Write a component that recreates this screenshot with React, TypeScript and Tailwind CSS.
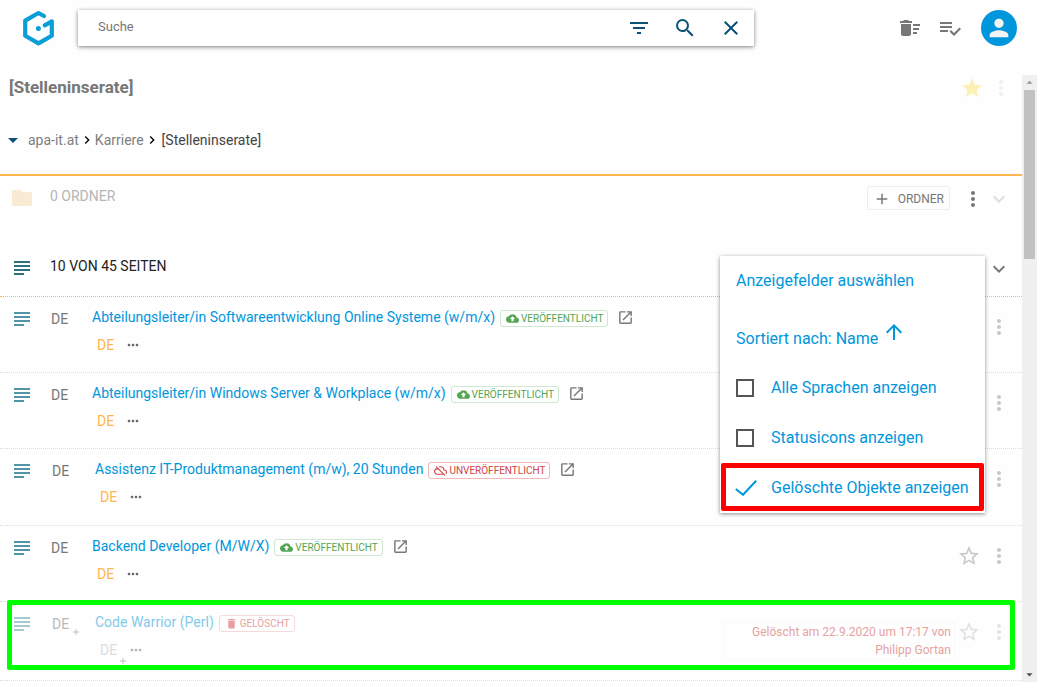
import { useState } from 'react'
import { clsx } from 'clsx'
import {
  MdAdd,
  MdArrowDropDown,
  MdArrowDropUp,
  MdArrowUpward,
  MdBackup,
  MdChevronRight,
  MdClose,
  MdDelete,
  MdDeleteSweep,
  MdExpandMore,
  MdFilterList,
  MdFolder,
  MdMoreHoriz,
  MdMoreVert,
  MdOpenInNew,
  MdOutlineCloudOff,
  MdPerson,
  MdSearch,
  MdStar,
  MdStarBorder,
  MdSubject,
} from 'react-icons/md'

type Status = 'published' | 'unpublished' | 'deleted'

interface Page {
  title: string
  status: Status
  starrable?: boolean
  note?: string
}

const pages: Page[] = [
  { title: 'Abteilungsleiter/in Softwareentwicklung Online Systeme (w/m/x)', status: 'published' },
  { title: 'Abteilungsleiter/in Windows Server & Workplace (w/m/x)', status: 'published' },
  { title: 'Assistenz IT-Produktmanagement (m/w), 20 Stunden', status: 'unpublished' },
  { title: 'Backend Developer (M/W/X)', status: 'published', starrable: true },
  {
    title: 'Code Warrior (Perl)',
    status: 'deleted',
    starrable: true,
    note: 'Gelöscht am 22.9.2020 um 17:17 von Philipp Gortan',
  },
]

const statusBadges = {
  published: { label: 'VERÖFFENTLICHT', icon: MdBackup, style: 'text-[#52a552] border-[#cfe8cf]' },
  unpublished: { label: 'UNVERÖFFENTLICHT', icon: MdOutlineCloudOff, style: 'text-[#cf4545] border-[#f0b8b8]' },
  deleted: { label: 'GELÖSCHT', icon: MdDelete, style: 'text-[#cf4545] border-[#f0b8b8]' },
}

const rowHeights = {
  published: 'h-[76px]',
  unpublished: 'h-[77px]',
  deleted: 'h-[79px]',
}

const Logo = () => (
  <svg className="h-9 w-8 shrink-0" viewBox="0 0 32 36" fill="none" stroke="#089fd9" strokeWidth="4.2" strokeLinejoin="round">
    <path d="M21 6 15.5 3 2.2 10.6v15.1l13.3 7.7 13.3-7.7V11.3L21.7 15.3" strokeLinecap="round" />
    <circle cx="15.4" cy="18.6" r="2.5" fill="#089fd9" stroke="none" />
  </svg>
)

const PlaylistCheck = () => (
  <svg className="h-6 w-6" viewBox="0 0 24 24" fill="currentColor">
    <path d="M14 10H2v2h12v-2zm0-4H2v2h12V6zM2 16h8v-2H2v2zm19.5-4.5L23 13l-6.99 7-4.51-4.5L13 14l3.01 3 5.49-5.5z" />
  </svg>
)

function Header() {
  return (
    <header className="flex h-[75px] shrink-0 items-start pt-[10px] pl-[23px]">
      <a href="#" aria-label="Startseite">
        <Logo />
      </a>
      <form className="ml-[23px] flex h-9 flex-1 items-center gap-[22px] rounded-[1px] bg-white pr-[11px] pl-5 text-[#0b5077] shadow-[0_1px_4px_rgba(0,0,0,0.5)]">
        <input
          type="text"
          aria-label="Suche"
          placeholder="Suche"
          className="h-8 min-w-0 flex-1 pb-1 text-[13px] outline-none placeholder:text-[#777]"
        />
        <button type="button" aria-label="Filter"><MdFilterList className="h-6 w-6" /></button>
        <button type="button" aria-label="Suchen"><MdSearch className="h-6 w-6" /></button>
        <button type="button" aria-label="Schließen"><MdClose className="h-6 w-6" /></button>
      </form>
      <div className="flex h-9 w-[283px] items-center justify-end gap-4 pr-5 text-[#777]">
        <button aria-label="Papierkorb"><MdDeleteSweep className="h-6 w-6" /></button>
        <button aria-label="Aufgaben"><PlaylistCheck /></button>
        <button aria-label="Benutzer" className="ml-[3px] flex h-9 w-9 items-center justify-center rounded-full bg-[#0096dc] text-[#f3f3f3]">
          <MdPerson className="h-7 w-7" />
        </button>
      </div>
    </header>
  )
}

function Breadcrumb() {
  return (
    <nav className="flex h-6 items-center text-sm text-[#808080]">
      <button aria-label="Pfad öffnen" className="mr-[3px] ml-px text-[#0b5077]"><MdArrowDropDown className="h-6 w-6" /></button>
      <a href="#">apa-it.at</a>
      <MdChevronRight className="h-4 w-4 text-black" />
      <a href="#">Karriere</a>
      <MdChevronRight className="h-4 w-4 text-black" />
      <span className="ml-[2px] text-[#444]">[Stelleninserate]</span>
    </nav>
  )
}

function DisplayMenu() {
  const [options, setOptions] = useState([
    { label: 'Alle Sprachen anzeigen', checked: false, marked: false },
    { label: 'Statusicons anzeigen', checked: false, marked: false },
    { label: 'Gelöschte Objekte anzeigen', checked: true, marked: true },
  ])

  const toggle = (label: string) => {
    setOptions(options.map((o) => (o.label === label ? { ...o, checked: !o.checked } : o)))
  }

  return (
    <div className="absolute top-4 right-[37px] z-10 flex h-[257px] w-[265px] flex-col bg-white text-base text-[#0096dc] shadow-[0_1px_4px_rgba(0,0,0,0.45)]">
      <button className="flex h-[50px] items-center pl-4">Anzeigefelder auswählen</button>
      <button className="flex h-[57px] items-center gap-1 pt-2 pl-4">
        Sortiert nach: Name
        <MdArrowUpward className="mb-[14px] h-6 w-6" />
      </button>
      {options.map((option) => (
        <label
          key={option.label}
          className={clsx('relative flex h-[50px] items-center pl-4', {
            'before:absolute before:inset-x-px before:top-0 before:h-12 before:rounded-[2px] before:border-[5px] before:border-[#ff0000]': option.marked,
          })}
        >
          <input
            type="checkbox"
            checked={option.checked}
            onChange={() => toggle(option.label)}
            className="mr-[17px] h-[18px] w-[18px] appearance-none border-2 border-[#555] checked:border-transparent"
          />
          {option.checked && (
            <svg className="absolute left-[15px] h-4 w-[22px]" viewBox="0 0 22 16" fill="none" stroke="currentColor" strokeWidth="2">
              <path d="M.8 9 8 14.8 21.2.8" />
            </svg>
          )}
          {option.label}
        </label>
      ))}
    </div>
  )
}

function StatusBadge({ status }: { status: Status }) {
  const badge = statusBadges[status]
  return (
    <span className={clsx('mt-[2px] flex h-[17px] items-center gap-[2px] rounded-[3px] border pr-1 pl-[5px] text-[10px]', badge.style)}>
      <badge.icon className="h-[13px] w-[13px]" />
      {badge.label}
    </span>
  )
}

function PageRow({ page }: { page: Page }) {
  const published = page.status === 'published'
  const deleted = page.status === 'deleted'

  return (
    <li className={clsx('relative border-b border-dotted border-[#ddd]', rowHeights[page.status])}>
      <div className={clsx('flex', { 'opacity-50': deleted })}>
        <MdSubject className="mt-[10px] ml-[10px] h-6 w-6 text-[#4f95a5]" />
        <div className={clsx('relative mt-3 ml-[17px] text-sm text-[#777]', published ? 'w-[41px]' : 'w-[44px] pl-px')}>
          DE
          {deleted && <MdAdd className="absolute top-[13px] left-5 h-[10px] w-[10px]" />}
        </div>
        <div className="flex-1 pt-[10px]">
          <div className="flex h-5 items-center gap-[5px]">
            <a href="#" className="text-sm text-[#0096dc]">{page.title}</a>
            <StatusBadge status={page.status} />
            {!deleted && (
              <a href="#" aria-label="Seite öffnen" className="mt-px ml-1 text-[#777]">
                <MdOpenInNew className="h-[17px] w-[17px]" />
              </a>
            )}
          </div>
          <div className={clsx('relative mt-2 flex h-5 items-center gap-[11px] pl-[5px] text-sm', deleted ? 'text-[#bbb]' : 'text-[#ffb64f]')}>
            DE
            {deleted && <MdAdd className="absolute top-4 left-[23px] h-[10px] w-[10px] text-[#777]" />}
            <button aria-label="Weitere Sprachen" className="text-[#666]"><MdMoreHoriz className="h-4 w-4" /></button>
          </div>
        </div>
        {page.note && (
          <p className="mt-5 mr-[2px] w-[231px] border border-dotted border-[#eee] pr-[3px] text-right text-xs leading-[18px] text-[#cf4545]">
            {page.note}
          </p>
        )}
        <div className="mt-[18px] mr-[11px] flex h-6 gap-[6px] text-[#c8c8c8]">
          {page.starrable && <button aria-label="Favorit"><MdStarBorder className="h-6 w-6" /></button>}
          <button aria-label="Optionen"><MdMoreVert className="h-6 w-6" /></button>
        </div>
      </div>
      {deleted && <div className="pointer-events-none absolute -top-[2px] right-[7px] left-[7px] h-[70px] rounded-[2px] border-[5px] border-[#00ff00]" />}
    </li>
  )
}

function Scrollbar() {
  return (
    <div className="flex w-[15px] shrink-0 flex-col items-center bg-[#f0f0f0]">
      <MdArrowDropUp className="h-[15px] w-[15px] text-[#999]" />
      <div className="h-[169px] w-[11px] bg-[#c1c1c1]" />
      <MdArrowDropDown className="mt-auto h-[15px] w-[15px] text-[#505050]" />
    </div>
  )
}

export default function App() {
  return (
    <div className="flex h-screen flex-col overflow-hidden bg-[#fefefe] font-[Roboto,sans-serif]">
      <Header />
      <div className="flex min-h-0 flex-1">
        <main className="min-w-0 flex-1 overflow-hidden">
          <div className="flex h-[99px] flex-col justify-between pt-px pb-[22px]">
            <div className="flex h-6 items-center pr-[9px] pl-[9px]">
              <h1 className="flex-1 text-[17px] font-bold text-[#777]">[Stelleninserate]</h1>
              <button aria-label="Favorit" className="mr-[5px] text-[#fdf0b4]"><MdStar className="h-6 w-6" /></button>
              <button aria-label="Optionen" className="text-[#eee]"><MdMoreVert className="h-6 w-6" /></button>
            </div>
            <Breadcrumb />
          </div>

          {/* Ordner */}
          <section className="flex h-[66px] items-start border-t-2 border-[#ffb64f] pt-[10px] pr-[11px] pl-[10px]">
            <MdFolder className="h-6 w-6 text-[#f9ead3]" />
            <h2 className="ml-4 flex-1 text-sm text-[#b5b5b5]">0 ORDNER</h2>
            <button className="flex h-6 items-center gap-[7px] rounded-[2px] border border-[#eee] px-[5px] pt-px text-xs text-[#777]">
              <MdAdd className="h-[18px] w-[18px]" />
              ORDNER
            </button>
            <button aria-label="Optionen" className="mt-px ml-[11px] text-[#777]"><MdMoreVert className="h-6 w-6" /></button>
            <button aria-label="Ausklappen" className="mt-px ml-[2px] text-[#ddd]"><MdExpandMore className="h-6 w-6" /></button>
          </section>

          {/* Seiten */}
          <section className="relative">
            <div className="flex h-[57px] items-start border-b border-dotted border-[#ffb64f] pt-4 pr-[11px] pl-[10px]">
              <MdSubject className="h-6 w-6 text-[#2f6f7e]" />
              <h2 className="ml-4 flex-1 text-sm text-[#222]">10 VON 45 SEITEN</h2>
              <button aria-label="Einklappen" className="mt-px text-[#777]"><MdExpandMore className="h-6 w-6" /></button>
            </div>
            <DisplayMenu />
            <ul>
              {pages.map((page) => (
                <PageRow key={page.title} page={page} />
              ))}
            </ul>
          </section>
        </main>
        <Scrollbar />
      </div>
    </div>
  )
}
